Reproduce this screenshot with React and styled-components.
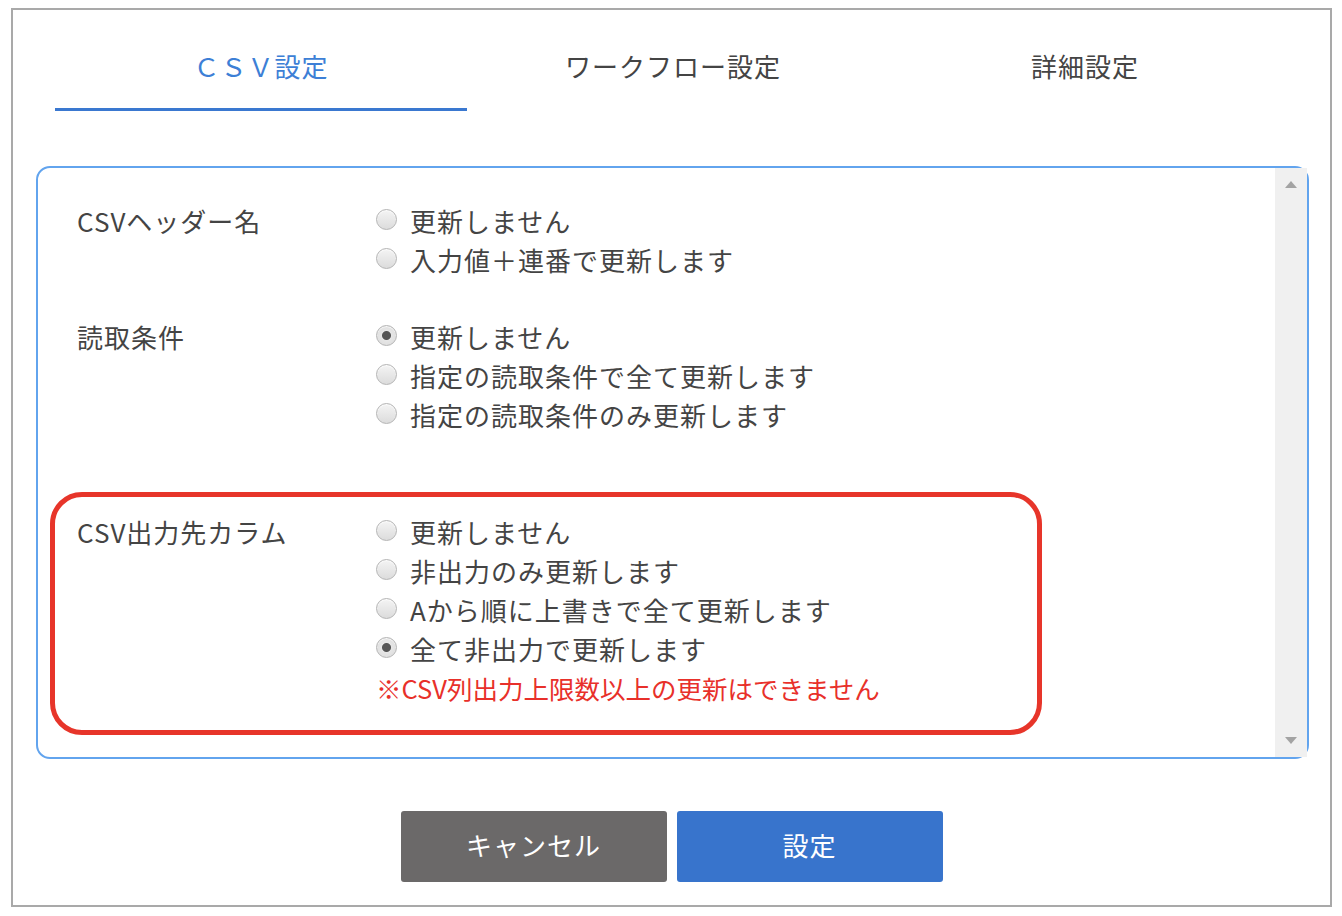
import React from 'react'
import styled, { createGlobalStyle } from 'styled-components'

const GlobalStyle = createGlobalStyle`
  body {
    margin: 0;
    background: #ffffff;
    font-family: "Noto Sans CJK JP", "Noto Sans", sans-serif;
    color: #444444;
  }
`

const tabs = ['ＣＳＶ設定', 'ワークフロー設定', '詳細設定']

const sections = [
  {
    label: 'CSVヘッダー名',
    name: 'header',
    options: ['更新しません', '入力値＋連番で更新します'],
    checked: -1,
  },
  {
    label: '読取条件',
    name: 'read',
    options: ['更新しません', '指定の読取条件で全て更新します', '指定の読取条件のみ更新します'],
    checked: 0,
  },
]

const outputSection = {
  label: 'CSV出力先カラム',
  name: 'output',
  options: ['更新しません', '非出力のみ更新します', 'Aから順に上書きで全て更新します', '全て非出力で更新します'],
  checked: 3,
  note: '※CSV列出力上限数以上の更新はできません',
}

export default function App() {
  return (
    <>
      <GlobalStyle />
      <Frame>
        <TabBar>
          {tabs.map((t, i) => (
            <Tab key={t} active={i === 0}>{t}</Tab>
          ))}
        </TabBar>

        <Panel>
          <PanelBody>
            {sections.map((s, i) => (
              <Section key={s.name} gap={i === 0 ? 38 : 58}>
                <Label>{s.label}</Label>
                <Options>
                  {s.options.map((o, j) => (
                    <Option key={o}>
                      <Radio type="radio" name={s.name} defaultChecked={j === s.checked} />
                      {o}
                    </Option>
                  ))}
                </Options>
              </Section>
            ))}

            <Highlight>
              <Label>{outputSection.label}</Label>
              <Options>
                {outputSection.options.map((o, j) => (
                  <Option key={o}>
                    <Radio type="radio" name={outputSection.name} defaultChecked={j === outputSection.checked} />
                    {o}
                  </Option>
                ))}
                <Note>{outputSection.note}</Note>
              </Options>
            </Highlight>
          </PanelBody>

          <ScrollBar>
            <Arrow />
            <Arrow down />
          </ScrollBar>
        </Panel>

        <Buttons>
          <Button kind="cancel">キャンセル</Button>
          <Button>設定</Button>
        </Buttons>
      </Frame>
    </>
  )
}

const Frame = styled.div`
  box-sizing: border-box;
  width: 1321px;
  margin: 8px 0 0 11px;
  border: 2px solid #a9a9a9;
  padding-bottom: 23px;
  background: #fff;
`

const TabBar = styled.div`
  display: grid;
  grid-template-columns: repeat(3, 412px);
  padding: 0 38px 0 42px;
`

const Tab = styled.div`
  padding: 36px 0 23px;
  line-height: 39px;
  font-size: 26px;
  letter-spacing: 1px;
  text-align: center;
  color: ${p => (p.active ? '#3d7fd6' : '#444')};
  border-bottom: 3px solid ${p => (p.active ? '#3a78d0' : 'transparent')};
`

const Panel = styled.div`
  box-sizing: border-box;
  display: flex;
  height: 593px;
  margin: 55px 21px 0 23px;
  border: 2px solid #62a4ee;
  border-radius: 14px;
`

const PanelBody = styled.div`
  flex: 1;
  padding-top: 33px;
`

const Section = styled.div`
  display: grid;
  grid-template-columns: 299px 1fr;
  padding-left: 39px;
  margin-bottom: ${p => p.gap}px;
`

const Highlight = styled.div`
  box-sizing: border-box;
  display: grid;
  grid-template-columns: 299px 1fr;
  width: 992px;
  margin-left: 12px;
  padding: 15px 0 23px 22px;
  border: 5px solid #e7352a;
  border-radius: 32px;
`

const Label = styled.div`
  font-size: 26px;
  line-height: 39px;
  letter-spacing: 1px;
  color: #444;
`

const Options = styled.div`
  display: flex;
  flex-direction: column;
`

const Option = styled.label`
  display: flex;
  align-items: center;
  gap: 13px;
  font-size: 26px;
  line-height: 39px;
  letter-spacing: 1px;
  color: #444;
`

const Radio = styled.input`
  appearance: none;
  box-sizing: border-box;
  width: 21px;
  height: 21px;
  margin: -3px 0 0 0;
  border: 1px solid #b4b4b4;
  border-radius: 50%;
  background: linear-gradient(#f4f4f4, #dcdcdc);
  box-shadow: inset 0 1px 1px rgba(255, 255, 255, 0.8);
  flex-shrink: 0;

  &:checked {
    background: radial-gradient(circle, #555 0 4px, #e6e6e6 5px, #dadada 100%);
  }
`

const Note = styled.div`
  font-size: 25.5px;
  line-height: 39px;
  color: #e8302a;
`

const ScrollBar = styled.div`
  width: 32px;
  background: #f0f0f0;
  display: flex;
  flex-direction: column;
  justify-content: space-between;
  align-items: center;
  padding: 13px 0 13px;
`

const Arrow = styled.div`
  width: 0;
  height: 0;
  border-left: 6px solid transparent;
  border-right: 6px solid transparent;
  ${p => (p.down ? 'border-top: 7px solid #a3a3a3;' : 'border-bottom: 7px solid #a3a3a3;')}
`

const Buttons = styled.div`
  display: flex;
  justify-content: center;
  gap: 10px;
  margin-top: 52px;
`

const Button = styled.button`
  width: 266px;
  height: 71px;
  padding: 0 0 5px;
  border: none;
  border-radius: 3px;
  font-family: "Noto Sans CJK JP", "Noto Sans", sans-serif;
  font-size: 26px;
  letter-spacing: 1px;
  color: #fff;
  background: ${p => (p.kind === 'cancel' ? '#6b6969' : '#3874cc')};
`
